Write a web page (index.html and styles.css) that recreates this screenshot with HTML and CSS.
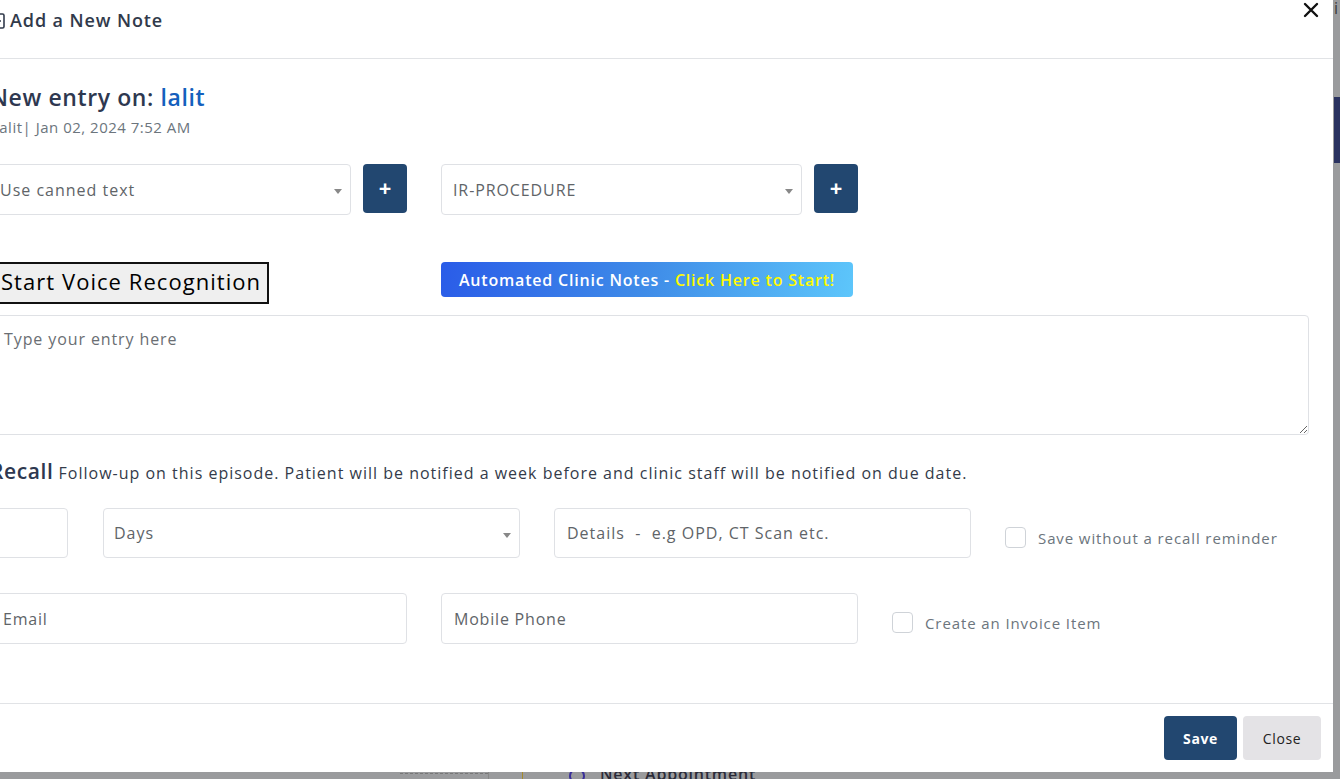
FILE: index.html
```html
<!DOCTYPE html>
<html lang="en">
<head>
<meta charset="utf-8">
<title>Add a New Note</title>
<link rel="stylesheet" href="styles.css">
</head>
<body>
<div class="backdrop">
  <div class="bg-top-text">i</div>
  <div class="bg-navy"></div>
  <div class="bg-bottom">
    <span class="bg-dash"></span>
    <span class="bg-vline"></span>
    <span class="bg-yline"></span>
    <span class="bg-radio"></span>
    <span class="bg-appt">Next Appointment</span>
  </div>
</div>

<div class="modal">
  <div class="modal-header">
    <div class="modal-title">
      <svg class="title-icon" width="14" height="16" viewBox="0 0 14 16"><rect x="1" y="1" width="12" height="14" rx="1.5" fill="none" stroke="#313a4b" stroke-width="1.6"/><path d="M4 8h6" stroke="#313a4b" stroke-width="1.4"/></svg>
      <span>Add a New Note</span>
    </div>
    <button class="close-x" aria-label="Close">
      <svg width="16" height="16" viewBox="0 0 16 16"><path d="M2 2L14 14M14 2L2 14" stroke="#111" stroke-width="2.4" stroke-linecap="round"/></svg>
    </button>
  </div>

  <div class="modal-body">
    <h2 class="entry-title">New entry on: <span class="entry-name">lalit</span></h2>
    <div class="entry-meta">lalit| Jan 02, 2024 7:52 AM</div>

    <div class="row row-selects">
      <div class="sel-group">
        <div class="select sel-wide"><span>Use canned text</span><i class="caret"></i></div>
        <button class="plus-btn">+</button>
      </div>
      <div class="sel-group">
        <div class="select sel-wide sel-upper"><span>IR-PROCEDURE</span><i class="caret"></i></div>
        <button class="plus-btn">+</button>
      </div>
    </div>

    <div class="row row-actions">
      <div class="col">
        <button class="voice-btn">Start Voice Recognition</button>
      </div>
      <div class="col">
        <button class="auto-btn">Automated Clinic Notes - <span class="auto-hl">Click Here to Start!</span></button>
      </div>
    </div>

    <textarea class="entry-text" placeholder="Type your entry here"></textarea>

    <div class="recall-line"><span class="recall-title">Recall</span> Follow-up on this episode. Patient will be notified a week before and clinic staff will be notified on due date.</div>

    <div class="row row-recall">
      <div class="field f-num"></div>
      <div class="select f-col"><span>Days</span><i class="caret"></i></div>
      <div class="field f-col"><span>Details&nbsp; -&nbsp; e.g OPD, CT Scan etc.</span></div>
      <label class="check check-1"><span class="box"></span><span class="check-label">Save without a recall reminder</span></label>
    </div>

    <div class="row row-contact">
      <div class="field f-col"><span>Email</span></div>
      <div class="field f-col"><span>Mobile Phone</span></div>
      <label class="check check-2"><span class="box"></span><span class="check-label">Create an Invoice Item</span></label>
    </div>
  </div>

  <div class="modal-footer">
    <button class="btn btn-save">Save</button>
    <button class="btn btn-close">Close</button>
  </div>
</div>
</body>
</html>
```

FILE: styles.css
```css
* { box-sizing: border-box; }
html, body { margin: 0; padding: 0; }
body {
  width: 1340px;
  height: 779px;
  overflow: hidden;
  font-family: "Open Sans", "Noto Sans", sans-serif;
  background: #9a9b9d;
  position: relative;
}

/* background page (dimmed) */
.backdrop {
  position: absolute;
  inset: 0;
  background: #9a9b9d;
}
.bg-top-text {
  position: absolute;
  left: 1334px;
  top: 0;
  font-size: 16px;
  color: #3a3a3a;
  line-height: 16px;
}
.bg-navy {
  position: absolute;
  left: 1334px;
  top: 97px;
  width: 6px;
  height: 66px;
  background: #2a3260;
}
.bg-bottom {
  position: absolute;
  left: 0;
  top: 772px;
  width: 1340px;
  height: 7px;
}
.bg-dash {
  position: absolute;
  left: 400px;
  top: 1px;
  width: 88px;
  border-top: 1px dashed #777;
}
.bg-vline {
  position: absolute;
  left: 488px;
  top: 0;
  width: 1px;
  height: 7px;
  background: #888;
}
.bg-yline {
  position: absolute;
  left: 522px;
  top: 0;
  width: 1px;
  height: 7px;
  background: #a58a2a;
}
.bg-radio {
  position: absolute;
  left: 569px;
  top: -4px;
  width: 16px;
  height: 16px;
  border: 2px solid #3a2f9a;
  border-radius: 50%;
}
.bg-appt {
  position: absolute;
  left: 600px;
  top: -8px;
  font-size: 16px;
  font-weight: 600;
  color: #2b2b38;
  line-height: 20px;
  letter-spacing: 0.8px;
}

/* modal */
.modal {
  position: absolute;
  left: -34px;
  top: 0;
  width: 1367px;
  height: 772px;
  background: #fff;
  display: flex;
  flex-direction: column;
}
.modal-header {
  height: 59px;
  border-bottom: 1px solid #e1e3e6;
  display: flex;
  justify-content: space-between;
  align-items: flex-start;
  padding: 0 14px 0 25px;
  flex: none;
}
.modal-title {
  display: flex;
  align-items: center;
  gap: 5px;
  margin-top: 8px;
  font-size: 18px;
  line-height: 24px;
  font-weight: 600;
  color: #313a4b;
  letter-spacing: 0.9px;
}
.title-icon { flex: none; margin-top: 1px; }
.close-x {
  border: 0;
  background: none;
  padding: 0;
  margin-top: 2px;
  width: 16px;
  height: 16px;
  cursor: pointer;
}
.close-x svg { display: block; }

.modal-body {
  flex: 1;
  padding: 0 24px;
  display: flex;
  flex-direction: column;
}
.entry-title {
  margin: 23px 0 0;
  font-size: 23px;
  line-height: 30px;
  font-weight: 600;
  color: #2e3850;
  margin-left: 0;
  letter-spacing: 0.6px;
}
.entry-name { color: #1460bd; }
.entry-meta {
  margin-top: 5px;
  font-size: 15px;
  line-height: 20px;
  color: #6c757d;
  margin-left: 5px;
  letter-spacing: 0.5px;
}

.row { display: flex; }
.row-selects {
  margin-top: 27px;
  gap: 34px;
}
.sel-group {
  display: flex;
  gap: 12px;
  align-items: flex-start;
}
.select, .field {
  height: 51px;
  border: 1px solid #dfe1e5;
  border-radius: 4px;
  background: #fff;
  display: flex;
  align-items: center;
  padding: 0 10px 0 9px;
  font-size: 16px;
  color: #606468;
  position: relative;
  letter-spacing: 1px;
}
.sel-wide { width: 361px; }
.sel-upper { padding-left: 11px; letter-spacing: 0.9px; }
.caret {
  position: absolute;
  right: 8px;
  top: 24px;
  width: 0;
  height: 0;
  border-left: 4px solid transparent;
  border-right: 4px solid transparent;
  border-top: 5px solid #888;
}
.plus-btn {
  width: 44px;
  height: 49px;
  border: 0;
  border-radius: 4px;
  background: #224770;
  color: #fff;
  font-size: 22px;
  font-weight: 700;
  line-height: 1;
  font-family: "Open Sans", sans-serif;
  padding: 0 0 3px;
}

.row-actions {
  margin-top: 47px;
  gap: 34px;
  align-items: flex-start;
}
.col { width: 417px; }
.voice-btn {
  border: 2px solid #111;
  background: #efefef;
  font-family: "Open Sans", sans-serif;
  font-size: 22px;
  line-height: 30px;
  color: #000;
  padding: 0 6px 5px 9px;
  height: 42px;
  border-radius: 0;
  letter-spacing: 1.05px;
}
.auto-btn {
  height: 35px;
  width: 412px;
  border: 0;
  border-radius: 4px;
  background: linear-gradient(100deg, #2a5ce8 0%, #3f8ce8 50%, #5dc6fb 100%);
  color: #fff;
  font-family: "Open Sans", sans-serif;
  font-size: 16px;
  font-weight: 600;
  padding: 0;
  letter-spacing: 0.8px;
}
.auto-hl { color: #fff900; }

.entry-text {
  margin-top: 11px;
  width: 1319px;
  height: 120px;
  border: 1px solid #dfe1e5;
  border-radius: 4px;
  padding: 12px 13px;
  font-family: "Open Sans", sans-serif;
  font-size: 16px;
  line-height: 22px;
  letter-spacing: 0.9px;
  resize: vertical;
  outline: none;
}
.entry-text::placeholder { color: #6a6e73; }

.recall-line {
  margin-top: 22px;
  font-size: 16px;
  line-height: 28px;
  color: #343b4a;
  letter-spacing: 1px;
}
.recall-title {
  font-size: 21px;
  font-weight: 600;
  color: #2e3850;
  letter-spacing: 0.6px;
}

.row-recall {
  margin-top: 21px;
  align-items: flex-start;
}
.f-num { width: 78px; height: 50px; margin-right: 35px; }
.f-col { width: 417px; }
.row-recall .f-col { height: 50px; margin-right: 34px; }
.row-recall .select { padding-left: 10px; }
.row-recall .field { padding-left: 12px; }
.row-contact .field { padding-left: 12px; letter-spacing: 0.8px; }

.check {
  display: flex;
  align-items: center;
  gap: 12px;
  font-size: 15px;
  color: #6c757d;
  letter-spacing: 0.9px;
}
.box {
  width: 21px;
  height: 21px;
  border: 1px solid #cfd3d8;
  border-radius: 4px;
  background: #fff;
  flex: none;
}
.check-1 { margin-top: 19px; }

.row-contact {
  margin-top: 35px;
  gap: 34px;
  align-items: flex-start;
}
.check-2 { margin-top: 19px; }

.modal-footer {
  flex: none;
  height: 69px;
  border-top: 1px solid #e1e3e6;
  display: flex;
  justify-content: flex-end;
  align-items: flex-start;
  gap: 6px;
  padding: 12px 12px 0 0;
}
.btn {
  height: 44px;
  border: 0;
  border-radius: 4px;
  font-family: "Open Sans", sans-serif;
  font-size: 14px;
  padding: 0;
  letter-spacing: 0.6px;
}
.btn-save {
  width: 73px;
  background: #224770;
  color: #fff;
  font-weight: 700;
}
.btn-close {
  width: 78px;
  background: #e4e3e6;
  color: #222;
}
```
